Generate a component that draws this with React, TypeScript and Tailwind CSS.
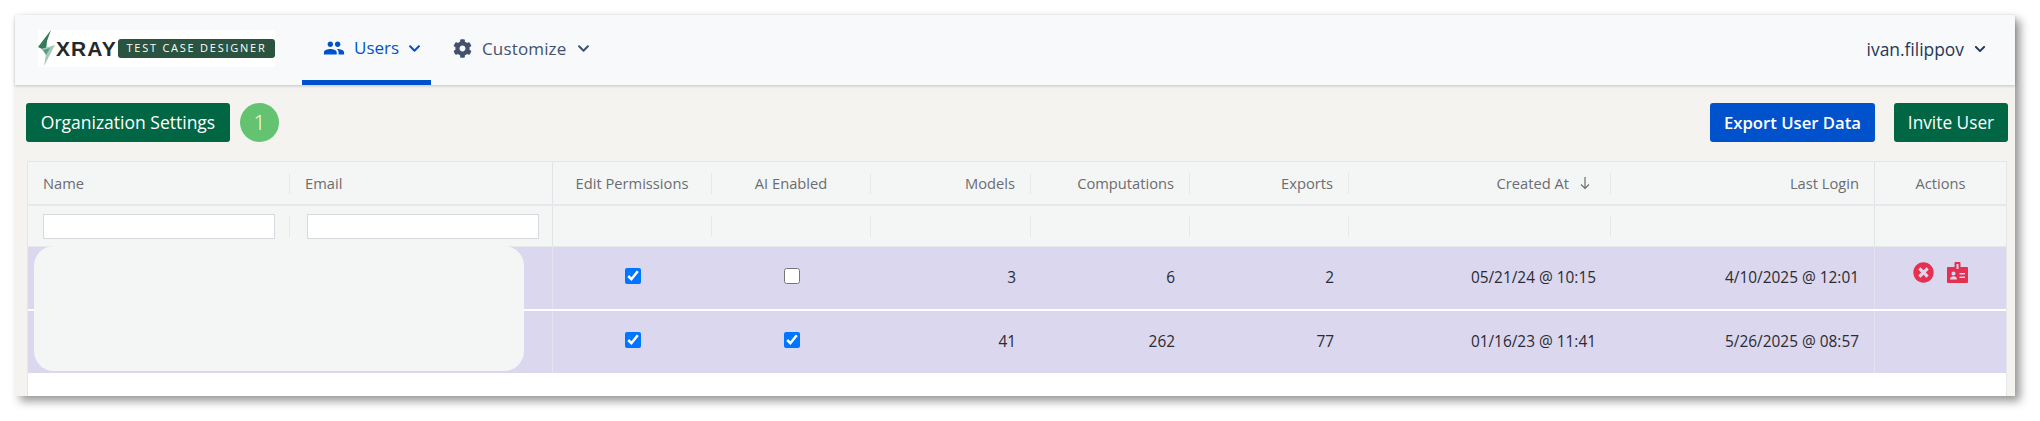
import { FaCog, FaChevronDown, FaTimesCircle } from "react-icons/fa";
import { MdPeople } from "react-icons/md";

const font = "font-['Open_Sans','Noto_Sans',sans-serif]";
const cols = "grid grid-cols-[262px_263px_159px_159px_160px_159px_159px_262px_264px_131px]";

type Col = { label: string; align: "left" | "center" | "right"; full?: boolean; sep?: boolean; sort?: boolean };
const columns: Col[] = [
  { label: "Name", align: "left", sep: true },
  { label: "Email", align: "left", full: true },
  { label: "Edit Permissions", align: "center", sep: true },
  { label: "AI Enabled", align: "center", sep: true },
  { label: "Models", align: "right", sep: true },
  { label: "Computations", align: "right", sep: true },
  { label: "Exports", align: "right", sep: true },
  { label: "Created At", align: "right", sep: true, sort: true },
  { label: "Last Login", align: "right", full: true },
  { label: "Actions", align: "center" },
];

const rows = [
  { edit: true, ai: false, models: "3", comps: "6", exports: "2", created: "05/21/24 @ 10:15", login: "4/10/2025 @ 12:01", actions: true },
  { edit: true, ai: true, models: "41", comps: "262", exports: "77", created: "01/16/23 @ 11:41", login: "5/26/2025 @ 08:57", actions: false },
];

function Logo() {
  return (
    <div className="flex items-center w-[237px] h-[37px] mb-[3px] bg-white shrink-0">
      <svg width="18" height="37" viewBox="0 0 18 37" className="shrink-0">
        <polygon points="13,0 0,17 8,21 9,11" fill="#37795b" />
        <polygon points="3,19 17,15 6,36 8,24" fill="#a3c9b7" />
        <polygon points="5,20 12,18 8,25" fill="#5c9a7e" />
      </svg>
      <span className="w-[62px] text-[21px] leading-none font-semibold text-[#25282b] font-['Liberation_Sans',sans-serif] tracking-[1.1px]">
        XRAY
      </span>
      <span className="flex items-center justify-center w-[157px] h-[19px] rounded-[3px] bg-[#2a5340] text-white text-[11px] font-medium tracking-[1.75px] whitespace-nowrap font-['Open_Sans',sans-serif]">
        TEST CASE DESIGNER
      </span>
    </div>
  );
}

function Header({ c }: { c: Col }) {
  const just = c.align === "left" ? "text-left" : c.align === "right" ? "text-right" : "text-center";
  return (
    <div className={`flex items-center h-full ${c.full ? "border-r border-[#e2e5e8]" : ""}`}>
      <div className={`flex-1 min-w-0 text-[14.7px] font-medium text-[#6b6d70] ${just} ${c.sort ? "pr-[29px]" : c.align === "right" ? "pr-[15px]" : ""} ${c.align === "left" ? "pl-[15px]" : ""}`}>
        {c.label}
        {c.sort && (
          <svg width="12" height="14" viewBox="0 0 12 14" className="inline-block ml-[10px] -mr-[10px] align-[-1px]" fill="none" stroke="#6b6d70" strokeWidth="1.2">
            <path d="M6 1v11M2 8.500 6 12.500 10 8.500" />
          </svg>
        )}
      </div>
      {c.sep && <span className="w-px h-[21px] bg-[#e6e9ea] shrink-0" />}
    </div>
  );
}

function FilterCell({ c, i }: { c: Col; i: number }) {
  return (
    <div className={`flex items-center h-full ${c.full ? "border-r border-[#e2e5e8]" : ""}`}>
      <div className={`flex-1 min-w-0 ${i === 0 ? "pl-[15px]" : i === 1 ? "pl-[17px]" : ""}`}>
        {i < 2 && <input type="text" className="block w-[232px] h-[25px] bg-white border border-[#d6dade]" />}
      </div>
      {c.sep && <span className="w-px h-[21px] bg-[#e6e9ea] shrink-0" />}
    </div>
  );
}

function Check({ on }: { on: boolean }) {
  return (
    <div className="flex items-start justify-center h-full pt-[21px]">
      <input type="checkbox" defaultChecked={on} className="w-[16px] h-[16px] m-0 accent-[#0075ff]" />
    </div>
  );
}

function Num({ v, full }: { v: string; full?: boolean }) {
  return (
    <div className={`flex items-center justify-end h-full pr-[15px] text-[15.4px] text-[#2b2b33] ${full ? "border-r border-[#e4e2f0]" : ""}`}>
      {v}
    </div>
  );
}

function Badge() {
  return (
    <svg width="21" height="21" viewBox="0 0 21 21" fill="#e5304f">
      <path fillRule="evenodd" d="M8.500 0h4a1 1 0 0 1 1 1v4H20a1 1 0 0 1 1 1v14a1 1 0 0 1-1 1H1a1 1 0 0 1-1-1V6a1 1 0 0 1 1-1h6.500V1a1 1 0 0 1 1-1Zm1 2v5h2V2ZM6.500 9.500a2 2 0 1 0 0 4 2 2 0 0 0 0-4ZM3 17.500h7c0-2-1.500-3.200-3.500-3.200S3 15.500 3 17.500ZM12.500 11v1.500H18V11Zm0 3.500V16H18v-1.500Z" />
    </svg>
  );
}

export default function App() {
  return (
    <div className={`${font} w-[2040px] h-[421px] bg-white pt-[15px] pl-[15px]`}>
      <div className="flex flex-col w-[2000px] h-[381px] bg-[#f4f3f0] shadow-[5px_5px_9px_rgba(0,0,0,0.42)]">
        <nav className="flex items-center shrink-0 h-[70px] pl-[23px] pr-[29px] bg-[#f8f9fb] shadow-[0_1px_3px_rgba(0,0,0,0.2)] relative">
          <Logo />
          <div className="flex h-full ml-[27px]">
            <div className="flex items-center pl-[21px] pr-[10px] h-full border-b-[5px] border-[#0052cc] pt-[1px] text-[#0052cc] text-[17px]">
              <MdPeople size={22} />
              <span className="w-[44px] ml-[9px]">Users</span>
              <FaChevronDown size={13} className="ml-[10px]" />
            </div>
            <div className="flex items-center pl-[22px] pr-[10px] h-full pb-[3px] text-[#42526e] text-[17px]">
              <FaCog size={19} />
              <span className="w-[85px] ml-[10px] tracking-[0.15px]">Customize</span>
              <FaChevronDown size={13} className="ml-[10px]" />
            </div>
          </div>
          <div className="flex items-center gap-[10px] ml-auto pb-[2px] text-[#253858] text-[17.4px] font-medium">
            <span>ivan.filippov</span>
            <FaChevronDown size={12} />
          </div>
        </nav>

        <div className="flex items-center shrink-0 pl-[11px] pr-[7px] pt-[18px] pb-[19px]">
          <button className="h-[39px] w-[204px] bg-[#006644] text-white text-[17.5px] rounded-[3px]">Organization Settings</button>
          <span className="flex items-center justify-center ml-[10px] w-[39px] h-[39px] rounded-full bg-[#63c371] text-white text-[21px] font-light">1</span>
          <button className="ml-auto h-[39px] w-[165px] bg-[#0052cc] text-white text-[16.7px] font-semibold rounded-[3px]">Export User Data</button>
          <button className="ml-[19px] h-[39px] w-[114px] bg-[#006644] text-white text-[17.3px] rounded-[3px]">Invite User</button>
        </div>

        <div className="relative flex-1 ml-[12px] mr-[8px] bg-white border-x border-t border-[#e4e7e9]">
          <div className={`${cols} h-[42px] bg-[#f4f6f6] border-b-2 border-[#e6e8eb] box-content`}>
            {columns.map((c) => <Header key={c.label} c={c} />)}
          </div>
          <div className={`${cols} h-[40px] bg-[#f4f6f6] border-b border-[#e6e8eb] box-content`}>
            {columns.map((c, i) => <FilterCell key={c.label} c={c} i={i} />)}
          </div>
          {rows.map((r, idx) => (
            <div key={idx} className={`${cols} h-[62px] bg-[#dad7ee] ${idx === 1 ? "mt-[2px]" : ""}`}>
              <div />
              <div className="border-r border-[#e4e2f0]" />
              <Check on={r.edit} />
              <Check on={r.ai} />
              <Num v={r.models} />
              <Num v={r.comps} />
              <Num v={r.exports} />
              <Num v={r.created} />
              <Num v={r.login} full />
              <div className="flex items-start pt-[15px] pl-[38px] gap-[13px] text-[#e5304f]">
                {r.actions && (
                  <>
                    <FaTimesCircle size={21} />
                    <Badge />
                  </>
                )}
              </div>
            </div>
          ))}
          <div className="absolute left-[6px] top-[84px] w-[490px] h-[125px] rounded-[20px] bg-[#f4f6f5]" />
        </div>
      </div>
    </div>
  );
}
